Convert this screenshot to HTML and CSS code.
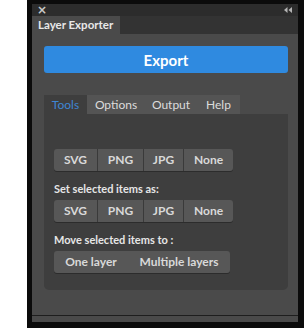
FILE: index.html
```html
<!DOCTYPE html>
<html>
<head>
<meta charset="utf-8">
<link rel="stylesheet" href="styles.css">
</head>
<body>
<div class="frame">
  <div class="panel">
    <div class="titlebar">
      <span class="close">×</span>
      <svg class="collapse" width="8" height="6" viewBox="0 0 8 6"><path d="M3.5 0 L0 3 L3.5 6 Z M8 0 L4.5 3 L8 6 Z" fill="#b4b4b4"/></svg>
    </div>
    <div class="tabrow">
      <div class="paneltab">Layer Exporter</div>
    </div>
    <div class="body">
      <button class="export">Export</button>
      <div class="tabs">
        <div class="tab active">Tools</div>
        <div class="tab">Options</div>
        <div class="tab">Output</div>
        <div class="tab">Help</div>
      </div>
      <div class="content">
        <div class="group first">
          <div class="btn w-svg">SVG</div>
          <div class="btn w-png">PNG</div>
          <div class="btn w-jpg">JPG</div>
          <div class="btn w-none">None</div>
        </div>
        <div class="label">Set selected items as:</div>
        <div class="group">
          <div class="btn w-svg">SVG</div>
          <div class="btn w-png">PNG</div>
          <div class="btn w-jpg">JPG</div>
          <div class="btn w-none">None</div>
        </div>
        <div class="label">Move selected items to :</div>
        <div class="group">
          <div class="btn plain w-one">One layer</div>
          <div class="btn plain w-multi">Multiple layers</div>
        </div>
      </div>
      <div class="footer"></div>
    </div>
  </div>
</div>
</body>
</html>
```

FILE: styles.css
```css
html, body {
  margin: 0;
  padding: 0;
  background: #ffffff;
}
body {
  font-family: Lato, "Liberation Sans", sans-serif;
}
.frame {
  margin-left: 27px;
  width: 277px;
  height: 328px;
  box-sizing: border-box;
  background: #0b0b0b;
  padding: 4px 6px 6px 5px;
}
.panel {
  height: 100%;
  background: #4a4a4a;
  display: flex;
  flex-direction: column;
}
.titlebar {
  height: 12px;
  background: #2c2c2c;
  display: flex;
  justify-content: space-between;
  align-items: center;
  padding: 0 6px 0 5px;
  color: #c8c8c8;
  font-size: 11px;
  line-height: 12px;
}
.close {
  font-family: "DejaVu Sans", sans-serif;
  font-size: 12px;
  font-weight: bold;
}
.tabrow {
  height: 18px;
  background: #333333;
  display: flex;
}
.paneltab {
  width: 88px;
  box-sizing: border-box;
  padding-left: 6px;
  background: #4a4a4a;
  color: #e8e8e8;
  font-weight: bold;
  font-size: 11.5px;
  line-height: 18px;
}
.body {
  flex: 1;
  display: flex;
  flex-direction: column;
  padding: 12px 10px 0 12px;
}
.export {
  height: 27px;
  border: none;
  border-radius: 3px;
  background: #2f8ae0;
  color: #ffffff;
  font-family: Lato, "Liberation Sans", sans-serif;
  font-weight: bold;
  font-size: 15px;
  padding: 0;
  margin: 0;
}
.tabs {
  margin-top: 22px;
  display: flex;
  width: 196px;
  height: 19px;
  background: #545454;
}
.tab {
  color: #dcdcdc;
  font-size: 12px;
  line-height: 19px;
  text-align: center;
}
.tab:nth-child(1) { width: 43px; }
.tab:nth-child(2) { width: 58px; }
.tab:nth-child(3) { width: 52px; }
.tab:nth-child(4) { width: 43px; }
.tab.active {
  background: #3e3e3e;
  color: #3f86d4;
}
.content {
  background: #3e3e3e;
  height: 176px;
  box-sizing: border-box;
  padding: 35px 0 0 10px;
  border-radius: 0 0 5px 5px;
  display: flex;
  flex-direction: column;
  align-items: flex-start;
}
.group {
  display: flex;
  height: 22px;
  border-radius: 3px;
  overflow: hidden;
  background: #575757;
  box-shadow: 0 1px 0 #2c2c2c;
}
.btn {
  height: 22px;
  line-height: 22px;
  text-align: center;
  color: #d9d9d9;
  font-weight: bold;
  font-size: 12px;
  border-left: 1px solid #3a3a3a;
  box-sizing: border-box;
}
.btn:first-child { border-left: none; }
.btn.plain { border-left: none; }
.w-svg { width: 43px; }
.w-png { width: 46px; }
.w-jpg { width: 40px; }
.w-none { width: 50px; }
.w-one { width: 74px; }
.w-multi { width: 102px; }
.label {
  color: #e6e6e6;
  font-size: 11px;
  font-weight: bold;
  line-height: 14px;
  margin-top: 11px;
  margin-bottom: 4px;
}
.footer {
  margin-top: 25px;
  margin-left: -12px;
  margin-right: -10px;
  border-bottom: 1px solid #1e1e1e;
}
```
